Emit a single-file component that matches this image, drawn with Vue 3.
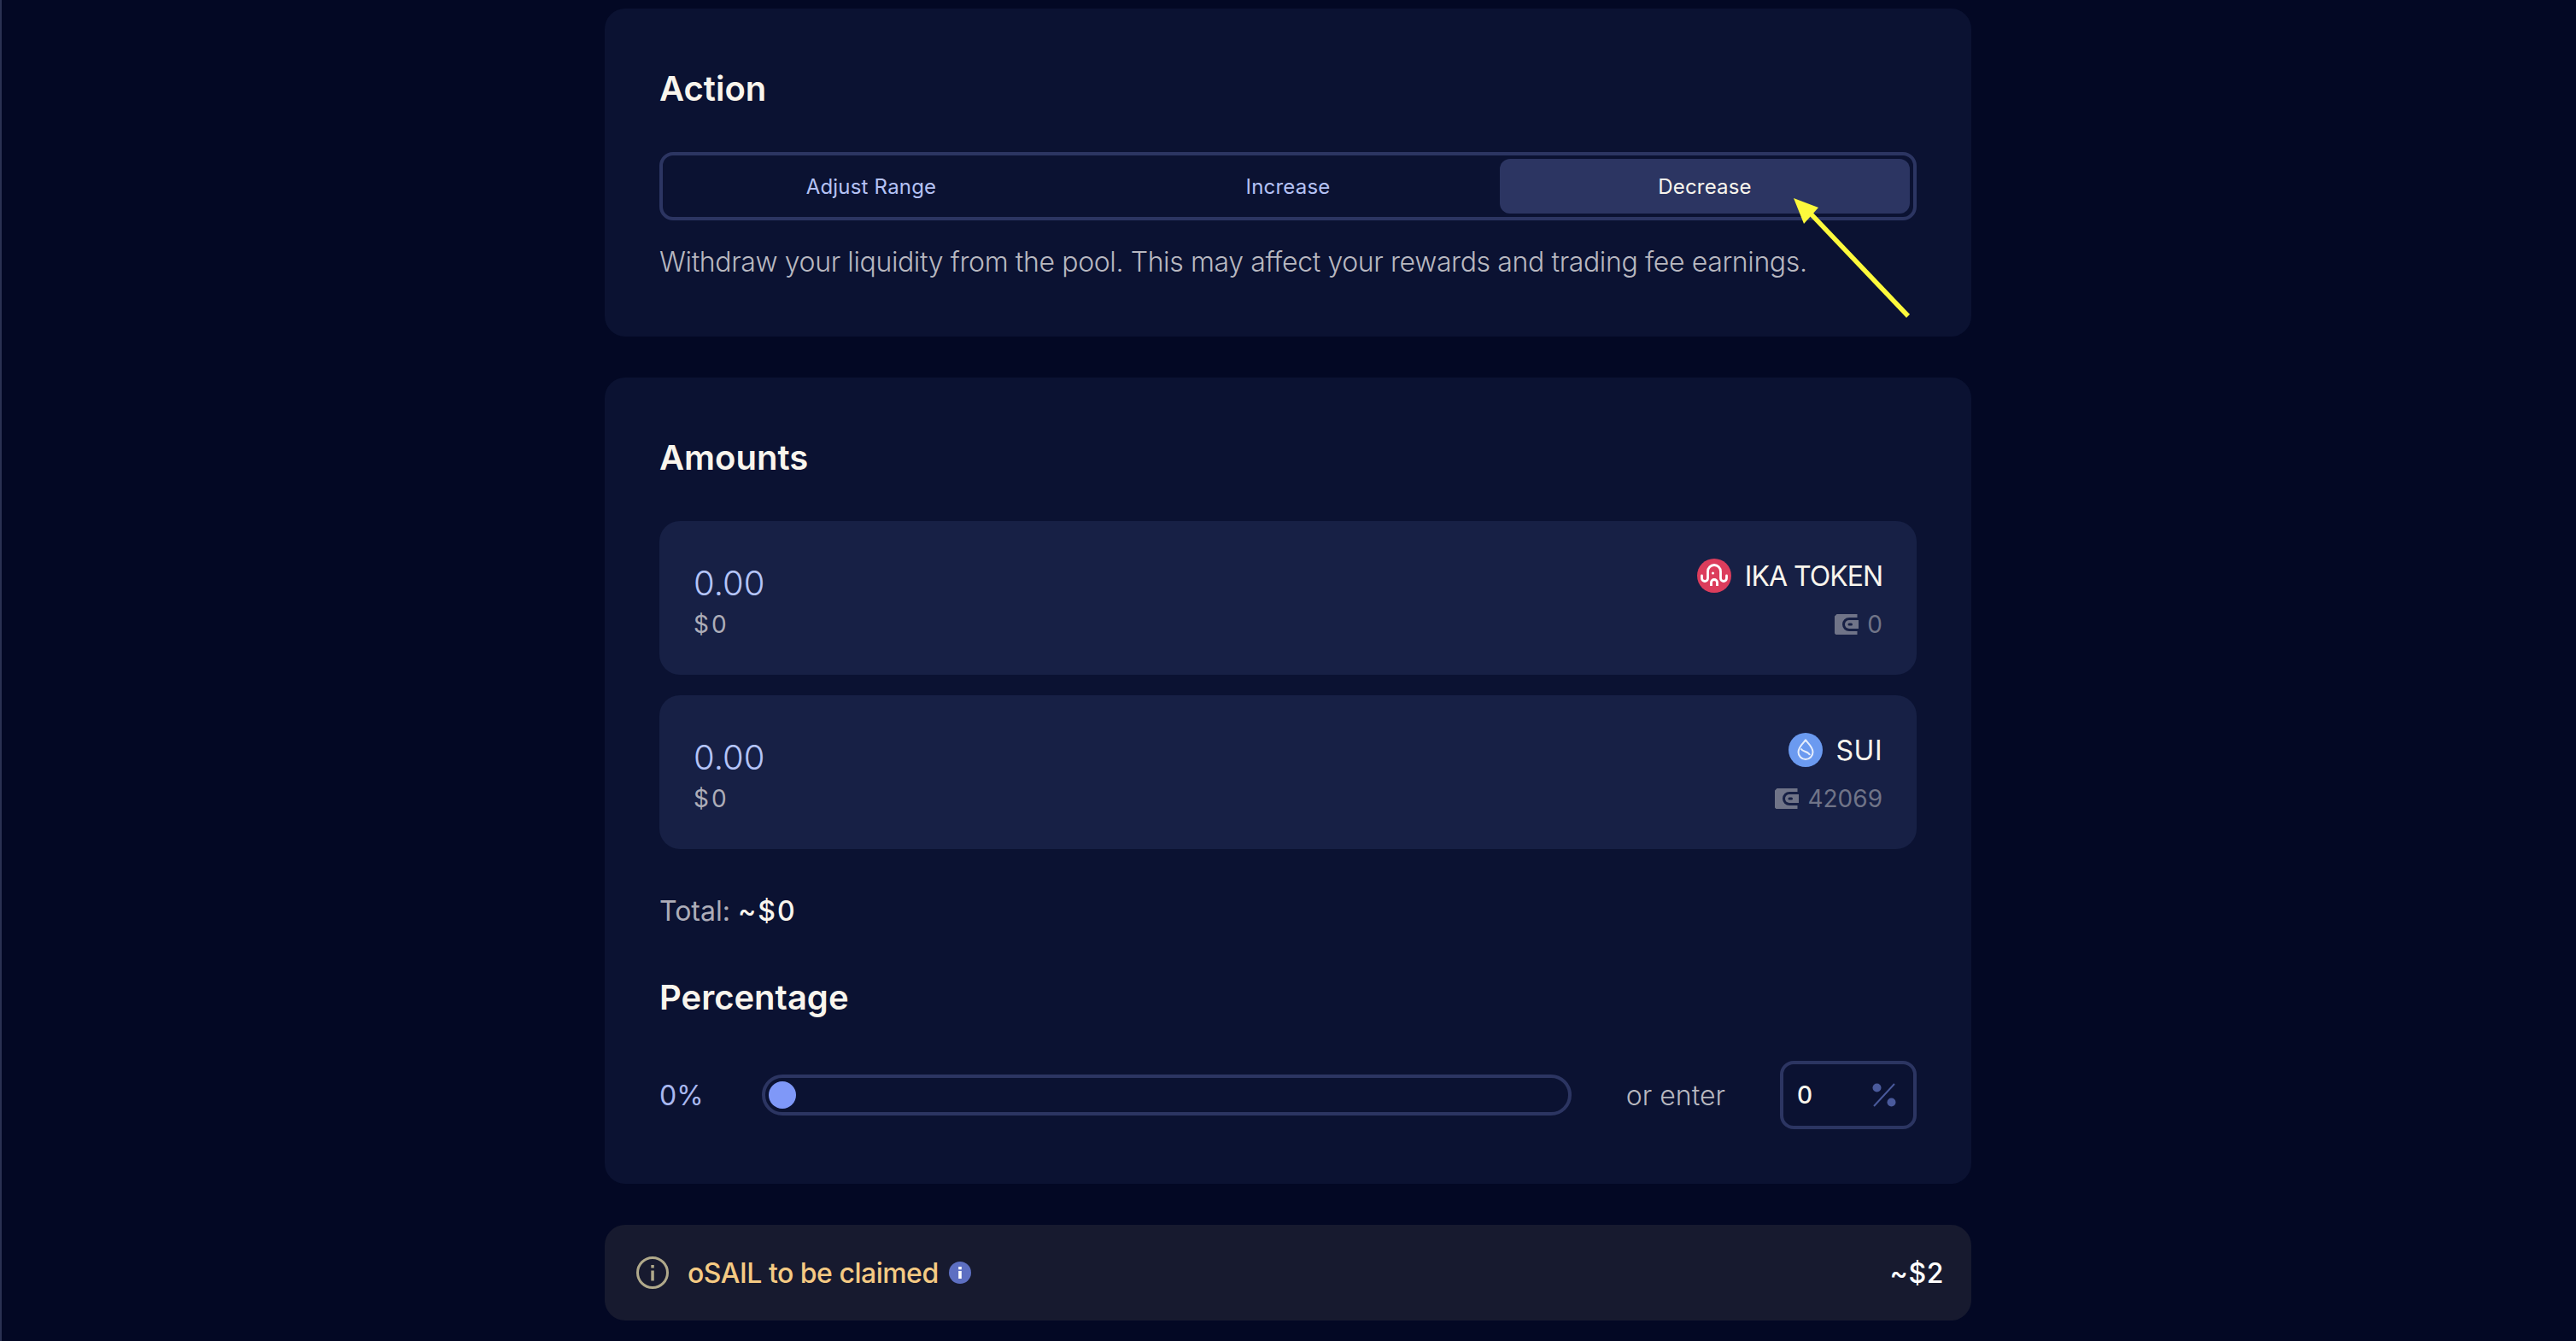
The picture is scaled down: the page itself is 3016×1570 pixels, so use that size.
<template>
  <div class="page">
    <section class="card">
      <h2 class="card-title">Action</h2>
      <div class="tabs">
        <button v-for="tab in tabs" :key="tab" class="tab" :class="{ active: tab === 'Decrease' }">{{ tab }}</button>
      </div>
      <p class="desc">Withdraw your liquidity from the pool. This may affect your rewards and trading fee earnings.</p>
      <!-- annotation arrow from the screenshot -->
      <svg class="arrow" width="150" height="150" viewBox="0 0 150 150">
        <path d="M142 143 L24 19" fill="none" stroke="#fdf93c" stroke-width="5.5" />
        <path d="M8 5 L37 16 L20 35 Z" fill="#fdf93c" />
      </svg>
    </section>

    <section class="card">
      <h2 class="card-title">Amounts</h2>
      <div class="amounts">
        <div v-for="row in amounts" :key="row.name" class="amount-box">
          <div class="amount-left">
            <span class="amount-value">0.00</span>
            <span class="amount-usd">$0</span>
          </div>
          <div class="amount-right">
            <div class="token">
              <svg v-if="row.name === 'IKA TOKEN'" class="token-icon" viewBox="0 0 40 40">
                <circle cx="20" cy="20" r="20" fill="#dc3d5c" />
                <path d="M5.500 20v3a3.500 3.500 0 0 0 7 0V15a7.500 7.500 0 0 1 15 0v8a3.500 3.500 0 0 0 7 0V20" fill="none" stroke="#fff" stroke-width="2.800" stroke-linecap="round" />
                <path d="M16.500 32v-4a3.500 3.500 0 0 1 7 0v4" fill="none" stroke="#fff" stroke-width="2.800" />
                <circle cx="18.500" cy="17" r="1.500" fill="#fff" />
              </svg>
              <svg v-else class="token-icon" viewBox="0 0 40 40">
                <circle cx="20" cy="20" r="20" fill="#6b9af0" />
                <path d="M20 8.500c4 4.600 8.500 8.600 8.500 14a8.500 8.500 0 0 1-17 0c0-5.400 4.500-9.400 8.500-14Z" fill="none" stroke="#e6eefc" stroke-width="2" />
                <path d="M14.500 18.500c2.500 4.500 8.500 2.500 10.500 7.500" fill="none" stroke="#e6eefc" stroke-width="2" />
              </svg>
              <span class="token-name" :class="{ short: row.name === 'SUI' }">{{ row.name }}</span>
            </div>
            <div class="balance">
              <svg class="wallet" width="28" height="24" viewBox="0 0 28 24">
                <path d="M0 2.500 2.500 0H26.500V4H17a8 8 0 0 0 0 16h9.500V24H1.500L0 22.500Z" fill="#707488" />
                <path d="M28 7V17H17a5 5 0 0 1 0-10Z" fill="#707488" />
                <rect x="15.500" y="10.500" width="5.500" height="3" rx="1.500" fill="#172045" />
              </svg>
              <span>{{ row.balance }}</span>
            </div>
          </div>
        </div>
      </div>
      <div class="total">Total: <span class="total-value">~$0</span></div>
      <h2 class="card-title percent-title">Percentage</h2>
      <div class="percent-row">
        <span class="percent-label">0%</span>
        <div class="slider"><span class="knob"></span></div>
        <span class="or-enter">or enter</span>
        <div class="percent-input">
          <span>0</span>
          <svg width="28" height="28" viewBox="0 0 28 28">
            <circle cx="5.500" cy="5.500" r="5" fill="#4a5a9c" />
            <circle cx="22.500" cy="22.500" r="5" fill="#4a5a9c" />
            <path d="M26 1 2 27" stroke="#4a5a9c" stroke-width="2" />
          </svg>
        </div>
      </div>
    </section>

    <section class="claim">
      <div class="claim-left">
        <svg width="38" height="38" viewBox="0 0 38 38">
          <circle cx="19" cy="19" r="17.500" fill="none" stroke="#b0a98b" stroke-width="3" />
          <rect x="17.300" y="16.500" width="3.500" height="12" fill="#b0a98b" />
          <rect x="17.300" y="10" width="3.500" height="3.500" fill="#b0a98b" />
        </svg>
        <span class="claim-text">oSAIL to be claimed</span>
        <svg width="26" height="26" viewBox="0 0 26 26">
          <circle cx="13" cy="13" r="13" fill="#5d6fc2" />
          <rect x="11.200" y="11" width="3.600" height="9" fill="#fff" />
          <rect x="11.200" y="6" width="3.600" height="3.300" fill="#fff" />
        </svg>
      </div>
      <span class="claim-value">~$2</span>
    </section>
  </div>
</template>

<script setup>
const tabs = ['Adjust Range', 'Increase', 'Decrease'];
const amounts = [
  { name: 'IKA TOKEN', balance: '0' },
  { name: 'SUI', balance: '42069' },
];
</script>

<style>
html, body {
  margin: 0;
  background: #030824;
}
</style>

<style scoped>
.page {
  box-sizing: border-box;
  height: 1570px;
  overflow: hidden;
  padding-top: 10px;
  border-left: 2px solid #2a3152;
  display: flex;
  flex-direction: column;
  align-items: center;
  gap: 48px;
  background: #030824;
  font-family: Inter, "Liberation Sans", sans-serif;
  color: #f9f5ed;
}

.card {
  position: relative;
  box-sizing: border-box;
  flex-shrink: 0;
  width: 1600px;
  margin-left: -2px;
  padding: 64px;
  background: #0b1232;
  border-radius: 24px;
}

.card-title {
  margin: 0;
  padding-top: 4px;
  font-size: 40px;
  line-height: 52px;
  font-weight: 600;
}

.tabs {
  display: flex;
  gap: 8px;
  margin-top: 48px;
  padding: 4px;
  border: 4px solid #2c3562;
  border-radius: 16px;
}

.tab {
  flex: 1;
  height: 64px;
  border: 0;
  border-radius: 12px;
  background: transparent;
  color: #b5c2f5;
  font: 400 24px Inter, sans-serif;
  letter-spacing: 0.2px;
}

.tab.active {
  background: #2c3562;
  color: #f9f5ed;
}

.desc {
  margin: 24px 0 0;
  padding-top: 2px;
  font-size: 32px;
  line-height: 46px;
  font-weight: 300;
  letter-spacing: -0.38px;
  color: #b8b8c0;
}

.arrow {
  position: absolute;
  left: 1384px;
  top: 217px;
}

.amounts {
  display: flex;
  flex-direction: column;
  gap: 24px;
  margin-top: 48px;
}

.amount-box {
  display: flex;
  justify-content: space-between;
  height: 180px;
  box-sizing: border-box;
  padding: 44px 40px 40px;
  background: #172045;
  border-radius: 24px;
}

.amount-left,
.amount-right {
  display: flex;
  flex-direction: column;
}

.amount-right {
  align-items: flex-end;
}

.amount-value {
  padding-top: 2px;
  font-size: 40px;
  line-height: 54px;
  font-weight: 300;
  color: #b4c4f8;
}

.amount-usd {
  padding-top: 2px;
  font-size: 28px;
  line-height: 38px;
  letter-spacing: 3px;
  color: #adadb8;
}

.token {
  display: flex;
  align-items: center;
  gap: 16px;
  height: 40px;
}

.token-icon {
  width: 40px;
  height: 40px;
}

.token-name {
  padding-top: 2px;
  font-size: 32px;
  line-height: 38px;
  letter-spacing: -1px;
}

.token-name.short {
  letter-spacing: 0.5px;
}

.balance {
  display: flex;
  align-items: center;
  gap: 10px;
  margin-top: 18px;
  font-size: 28px;
  line-height: 38px;
  color: #707488;
}

.total {
  margin-top: 48px;
  padding-top: 2px;
  font-size: 32px;
  line-height: 46px;
  color: #adadb8;
}

.total-value {
  font-weight: 500;
  letter-spacing: 2px;
  color: #f9f5ed;
}

.percent-title {
  margin-top: 48px;
}

.percent-row {
  display: flex;
  align-items: center;
  gap: 64px;
  height: 80px;
  margin-top: 48px;
}

.percent-label {
  width: 56px;
  font-size: 32px;
  color: #a9b8f0;
}

.slider {
  flex: 1;
  box-sizing: border-box;
  height: 48px;
  padding: 4px;
  border: 4px solid #2c3562;
  border-radius: 24px;
}

.knob {
  display: block;
  width: 32px;
  height: 32px;
  border-radius: 50%;
  background: #7f98f8;
}

.or-enter {
  font-size: 32px;
  font-weight: 300;
  color: #b8b8c0;
}

.percent-input {
  box-sizing: border-box;
  display: flex;
  align-items: center;
  justify-content: space-between;
  width: 160px;
  height: 80px;
  padding: 0 20px 0 16px;
  border: 4px solid #2c3562;
  border-radius: 16px;
  font-size: 28px;
  font-weight: 500;
}

.claim {
  box-sizing: border-box;
  flex-shrink: 0;
  display: flex;
  align-items: center;
  justify-content: space-between;
  width: 1600px;
  height: 112px;
  margin-left: -2px;
  padding: 0 32px 0 37px;
  background: #171a2f;
  border-radius: 24px;
}

.claim-left {
  display: flex;
  align-items: center;
  gap: 22px;
}

.claim-left svg:last-child {
  margin-left: -10px;
}

.claim-text {
  font-size: 32px;
  font-weight: 500;
  letter-spacing: -0.5px;
  color: #f5ca83;
}

.claim-value {
  font-size: 32px;
  font-weight: 500;
  letter-spacing: 0.6px;
  color: #fff;
}
</style>
